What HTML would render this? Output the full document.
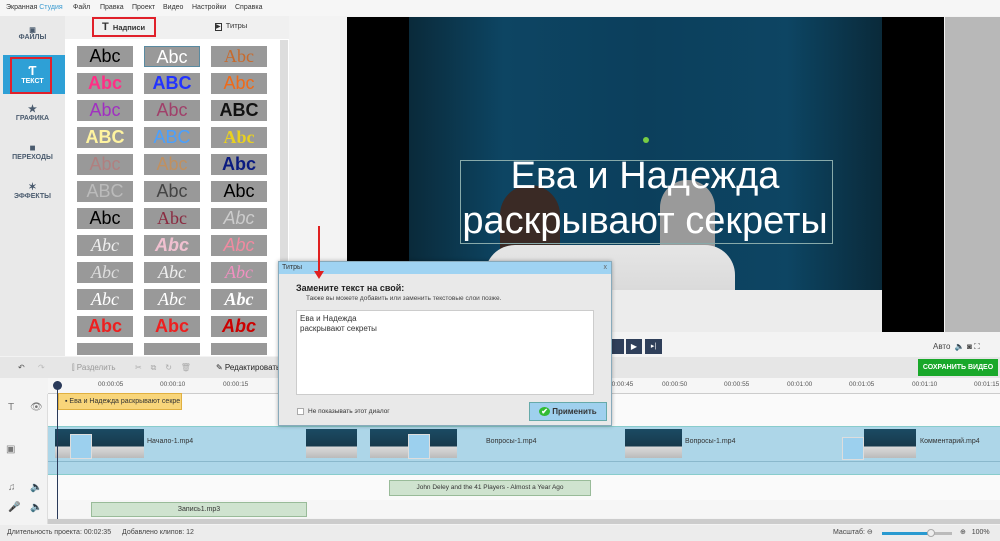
<!DOCTYPE html>
<html><head><meta charset="utf-8"><style>
*{margin:0;padding:0;box-sizing:border-box}
body{width:1000px;height:541px;overflow:hidden;background:#f3f3f3;font-family:"Liberation Sans",sans-serif;font-size:8px;color:#333;position:relative}
.a{position:absolute}
.tile{position:absolute;width:56px;height:21px;background:#999;font-size:18px;text-align:center;line-height:21px;font-family:"Liberation Sans",sans-serif;overflow:hidden}
.side{position:absolute;left:0;width:65px;height:38px;text-align:center;font-size:7px;font-weight:bold;color:#4a5b6e}
.ruler span{position:absolute;top:3px;font-size:6.5px;color:#555}
.thumb{position:absolute;background:linear-gradient(#1b4b63,#17394c 60%,#dcdcdc 60%,#bbb);}
</style></head><body>
<div class="a" style="left:0;top:0;width:1000px;height:16px;background:#f6f6f6;font-size:7px;line-height:16px">
<span class="a" style="left:6px">Экранная <span style="color:#3a9ad0">Студия</span></span>
<span class="a" style="left:73px">Файл</span><span class="a" style="left:100px">Правка</span><span class="a" style="left:132px">Проект</span><span class="a" style="left:163px">Видео</span><span class="a" style="left:192px">Настройки</span><span class="a" style="left:235px">Справка</span>
</div>
<div class="a" style="left:0;top:16px;width:65px;height:340px;background:#e9e9e9"></div>
<div class="side" style="top:16px;padding-top:10px">▣<br>ФАЙЛЫ</div>
<div class="a" style="left:3px;top:55px;width:62px;height:39px;background:#2ea0d6"></div>
<div class="a" style="left:10px;top:57px;width:42px;height:37px;border:2px solid #e0202a"></div>
<div class="side" style="top:58px;padding-top:6px;color:#fff;font-size:7px">
<div style="font-size:13px;line-height:14px">Ƭ</div>ТЕКСТ</div>
<div class="side" style="top:100px;padding-top:4px"><div style="font-size:10px">★</div>ГРАФИКА</div>
<div class="side" style="top:139px;padding-top:4px"><div style="font-size:10px">■</div>ПЕРЕХОДЫ</div>
<div class="side" style="top:178px;padding-top:4px"><div style="font-size:10px">✶</div>ЭФФЕКТЫ</div>
<div class="a" style="left:65px;top:16px;width:224px;height:340px;background:#fff"></div>
<div class="a" style="left:65px;top:16px;width:224px;height:23px;background:#f0f0f0"></div>
<div class="a" style="left:92px;top:17px;width:64px;height:20px;border:2px solid #e0202a;font-size:7.5px;font-weight:bold;line-height:16px;padding-left:8px"><b style="font-size:11px">T</b>&nbsp; Надписи</div>
<div class="a" style="left:215px;top:21px;font-size:7.5px"><span style="border:1px solid #333;font-size:6px">▶</span>&nbsp; Титры</div>
<div class="a" style="left:280px;top:40px;width:8px;height:316px;background:#ddd"></div>
<div class="tile" style="left:77px;top:46px;color:#000">Abc</div>
<div class="tile" style="left:144px;top:46px;color:#fff;border:1px solid #5a8aa0">Abc</div>
<div class="tile" style="left:211px;top:46px;color:#c86a2c;font-family:'Liberation Serif'">Abc</div>
<div class="tile" style="left:77px;top:73px;color:#ff2f86;font-weight:bold">Abc</div>
<div class="tile" style="left:144px;top:73px;color:#2233ff;font-weight:bold">ABC</div>
<div class="tile" style="left:211px;top:73px;color:#f06a18">Abc</div>
<div class="tile" style="left:77px;top:100px;color:#a030c0">Abc</div>
<div class="tile" style="left:144px;top:100px;color:#a0406a">Abc</div>
<div class="tile" style="left:211px;top:100px;color:#111;font-weight:bold">ABC</div>
<div class="tile" style="left:77px;top:127px;color:#fff4a0;font-weight:bold">ABC</div>
<div class="tile" style="left:144px;top:127px;color:#4aa0ff">ABC</div>
<div class="tile" style="left:211px;top:127px;color:#e8d020;font-weight:bold;font-family:'Liberation Serif'">Abc</div>
<div class="tile" style="left:77px;top:154px;color:#b08080">Abc</div>
<div class="tile" style="left:144px;top:154px;color:#c09060">Abc</div>
<div class="tile" style="left:211px;top:154px;color:#0a1a80;font-weight:bold">Abc</div>
<div class="tile" style="left:77px;top:181px;color:#bbb">ABC</div>
<div class="tile" style="left:144px;top:181px;color:#444">Abc</div>
<div class="tile" style="left:211px;top:181px;color:#000">Abc</div>
<div class="tile" style="left:77px;top:208px;color:#000">Abc</div>
<div class="tile" style="left:144px;top:208px;color:#8a2a40;font-family:'Liberation Serif'">Abc</div>
<div class="tile" style="left:211px;top:208px;color:#ccc;font-style:italic">Abc</div>
<div class="tile" style="left:77px;top:235px;color:#eee;font-style:italic;font-family:'Liberation Serif'">Abc</div>
<div class="tile" style="left:144px;top:235px;color:#f0c0d0;font-style:italic;font-weight:bold">Abc</div>
<div class="tile" style="left:211px;top:235px;color:#f08aa0;font-style:italic">Abc</div>
<div class="tile" style="left:77px;top:262px;color:#ddd;font-style:italic;font-family:'Liberation Serif'">Abc</div>
<div class="tile" style="left:144px;top:262px;color:#eee;font-style:italic;font-family:'Liberation Serif'">Abc</div>
<div class="tile" style="left:211px;top:262px;color:#f090c0;font-style:italic;font-family:'Liberation Serif'">Abc</div>
<div class="tile" style="left:77px;top:289px;color:#fff;font-style:italic;font-family:'Liberation Serif'">Abc</div>
<div class="tile" style="left:144px;top:289px;color:#fff;font-style:italic;font-family:'Liberation Serif'">Abc</div>
<div class="tile" style="left:211px;top:289px;color:#fff;font-style:italic;font-weight:bold;font-family:'Liberation Serif'">Abc</div>
<div class="tile" style="left:77px;top:316px;color:#ee2020;font-weight:bold">Abc</div>
<div class="tile" style="left:144px;top:316px;color:#ee2020;font-weight:bold">Abc</div>
<div class="tile" style="left:211px;top:316px;color:#cc0000;font-weight:bold;font-style:italic">Abc</div>
<div class="tile" style="left:77px;top:343px;height:12px"></div>
<div class="tile" style="left:144px;top:343px;height:12px"></div>
<div class="tile" style="left:211px;top:343px;height:12px"></div>
<div class="a" style="left:290px;top:16px;width:710px;height:340px;background:#f3f3f3"></div>
<div class="a" style="left:347px;top:17px;width:597px;height:315px;background:#000"></div>
<div class="a" style="left:945px;top:17px;width:55px;height:315px;background:#b8b8b8"></div>
<div class="a" style="left:409px;top:17px;width:473px;height:315px;background:linear-gradient(90deg,#0a2a3a,#0d4563 20%,#0c3f5c 50%,#0d4563 80%,#0a2a3a);"></div>
<div class="a" style="left:500px;top:185px;width:60px;height:70px;background:#3a2a25;border-radius:30px 30px 0 0"></div>
<div class="a" style="left:660px;top:180px;width:55px;height:70px;background:#9a9a9a;border-radius:28px 28px 0 0"></div>
<div class="a" style="left:485px;top:245px;width:250px;height:87px;background:linear-gradient(#e6e6e6,#cfcfcf);border-radius:30px 30px 0 0"></div>
<div class="a" style="left:590px;top:290px;width:292px;height:42px;background:#ececec"></div>
<div class="a" style="left:460px;top:160px;width:373px;height:84px;border:1px solid #8aa"></div>
<div class="a" style="left:345px;top:154px;width:600px;text-align:center;color:#fff;font-size:38px;line-height:45px;white-space:nowrap">Ева и Надежда<br>раскрывают секреты</div>
<div class="a" style="left:643px;top:137px;width:6px;height:6px;border-radius:50%;background:#7c4"></div>
<div class="a" style="left:608px;top:339px;width:16px;height:15px;background:#2f3f5a"></div>
<div class="a" style="left:626px;top:339px;width:16px;height:15px;background:#2f3f5a;color:#fff;font-size:8px;text-align:center;line-height:15px">▶</div>
<div class="a" style="left:645px;top:339px;width:17px;height:15px;background:#2f3f5a;color:#fff;font-size:7px;text-align:center;line-height:15px">▸|</div>
<div class="a" style="left:933px;top:342px;font-size:8px;color:#444">Авто &nbsp;🔈 ◙ ⛶</div>
<div class="a" style="left:0;top:357px;width:1000px;height:21px;background:#e6e6e6;font-size:8px;line-height:21px;color:#555">
<span class="a" style="left:18px">↶</span><span class="a" style="left:38px;color:#bbb">↷</span>
<span class="a" style="left:72px;color:#999">⫿ Разделить</span><span class="a" style="left:135px;color:#aaa">✂ &nbsp;&nbsp; ⧉ &nbsp;&nbsp; ↻ &nbsp;&nbsp; 🗑</span>
<span class="a" style="left:216px;color:#222">✎ Редактировать</span></div>
<div class="a" style="left:918px;top:359px;width:80px;height:17px;background:#19a82a;color:#fff;font-size:7px;font-weight:bold;text-align:center;line-height:17px">СОХРАНИТЬ ВИДЕО</div>
<div class="a ruler" style="left:48px;top:378px;width:952px;height:16px;background:#f6f6f6;border-bottom:1px solid #ccc">
<span style="left:50px">00:00:05</span><span style="left:112px">00:00:10</span><span style="left:175px">00:00:15</span><span style="left:560px">00:00:45</span><span style="left:614px">00:00:50</span><span style="left:676px">00:00:55</span><span style="left:739px">00:01:00</span><span style="left:801px">00:01:05</span><span style="left:864px">00:01:10</span><span style="left:926px">00:01:15</span>
</div>
<div class="a" style="left:0;top:394px;width:48px;height:130px;background:#f3f3f3;border-right:1px solid #ddd;color:#777;font-size:10px">
<span class="a" style="left:8px;top:8px">T</span><span class="a" style="left:30px;top:8px">👁</span>
<span class="a" style="left:6px;top:50px">▣</span>
<span class="a" style="left:8px;top:88px">♫</span><span class="a" style="left:30px;top:88px">🔈</span>
<span class="a" style="left:8px;top:108px">🎤</span><span class="a" style="left:30px;top:108px">🔈</span></div>
<div class="a" style="left:48px;top:394px;width:952px;height:32px;background:#fafafa"></div>
<div class="a" style="left:58px;top:393px;width:124px;height:17px;background:#f8d57a;border:1px solid #e0b040;font-size:7px;line-height:15px;padding-left:6px;white-space:nowrap;overflow:hidden">▪ Ева и Надежда раскрывают секре</div>
<div class="a" style="left:48px;top:426px;width:952px;height:49px;background:#add6e8;border-top:1px solid #8cc;border-bottom:1px solid #8cc"></div>
<div class="a" style="left:48px;top:461px;width:952px;height:1px;background:#8ab8cc"></div>
<div class="thumb" style="left:55px;top:429px;width:89px;height:29px"></div>
<div class="a" style="left:70px;top:434px;width:22px;height:25px;background:#9cd0ee;border:1px solid #ddd"></div>
<div class="a" style="left:147px;top:438px;font-size:7px">Начало-1.mp4</div>
<div class="thumb" style="left:306px;top:429px;width:51px;height:29px"></div>
<div class="thumb" style="left:370px;top:429px;width:87px;height:29px"></div>
<div class="a" style="left:408px;top:434px;width:22px;height:25px;background:#9cd0ee;border:1px solid #ddd"></div>
<div class="a" style="left:486px;top:438px;font-size:7px">Вопросы-1.mp4</div>
<div class="thumb" style="left:625px;top:429px;width:57px;height:29px"></div>
<div class="a" style="left:685px;top:438px;font-size:7px">Вопросы-1.mp4</div>
<div class="thumb" style="left:864px;top:429px;width:52px;height:29px"></div>
<div class="a" style="left:842px;top:437px;width:22px;height:23px;background:#9cd0ee;border:1px solid #ddd"></div>
<div class="a" style="left:920px;top:438px;font-size:7px">Комментарий.mp4</div>
<div class="a" style="left:48px;top:475px;width:952px;height:25px;background:#fafafa"></div>
<div class="a" style="left:389px;top:480px;width:202px;height:16px;background:#cfe3cf;border:1px solid #9b9;font-size:6.5px;text-align:center;line-height:14px">John Deley and the 41 Players - Almost a Year Ago</div>
<div class="a" style="left:48px;top:500px;width:952px;height:18px;background:#f6f6f6"></div>
<div class="a" style="left:91px;top:502px;width:216px;height:15px;background:#cfe3cf;border:1px solid #9b9;font-size:7px;text-align:center;line-height:13px">Запись1.mp3</div>
<div class="a" style="left:48px;top:519px;width:952px;height:5px;background:#ccc"></div>
<div class="a" style="left:57px;top:381px;width:1px;height:138px;background:#2a3a5a"></div>
<div class="a" style="left:53px;top:381px;width:9px;height:9px;border-radius:50%;background:#2a3a5a"></div>
<div class="a" style="left:0;top:525px;width:1000px;height:16px;background:#ececec;font-size:7px;line-height:16px;color:#444">
<span class="a" style="left:7px">Длительность проекта: 00:02:35</span><span class="a" style="left:122px">Добавлено клипов: 12</span>
<span class="a" style="left:833px">Масштаб: ⊖</span><div class="a" style="left:882px;top:7px;width:70px;height:3px;background:#bbb"><div style="width:48px;height:3px;background:#2a9ad0"></div></div>
<div class="a" style="left:927px;top:4px;width:8px;height:8px;border-radius:50%;background:#eee;border:1px solid #aaa"></div>
<span class="a" style="left:960px">⊕ &nbsp; 100%</span></div>
<div class="a" style="left:278px;top:261px;width:334px;height:165px;background:#e9e9e9;border:1px solid #8ab;box-shadow:0 0 4px rgba(0,0,0,.3)">
<div style="height:12px;background:#9fd3f2;font-size:7px;line-height:12px;padding-left:3px">Титры<span style="float:right;padding-right:4px;color:#666">x</span></div>
<div class="a" style="left:17px;top:21px;font-size:9px;font-weight:bold;color:#222">Замените текст на свой:</div>
<div class="a" style="left:27px;top:33px;font-size:6.5px;color:#444">Также вы можете добавить или заменить текстовые слои позже.</div>
<div class="a" style="left:17px;top:48px;width:298px;height:85px;background:#fff;border:1px solid #ccc;font-size:8px;line-height:10px;padding:3px">Ева и Надежда<br>раскрывают секреты</div>
<div class="a" style="left:18px;top:146px;width:7px;height:7px;background:#fff;border:1px solid #aaa"></div>
<div class="a" style="left:29px;top:146px;font-size:6.5px">Не показывать этот диалог</div>
<div class="a" style="left:250px;top:140px;width:78px;height:19px;background:#9fd0ee;border:1px solid #6aa;font-size:8px;font-weight:bold;text-align:center;line-height:17px"><span style="color:#fff;background:#3b3;border-radius:50%;padding:0 2px">✔</span> Применить</div>
</div>
<div class="a" style="left:318px;top:226px;width:2px;height:48px;background:#e02020"></div>
<div class="a" style="left:314px;top:271px;width:0;height:0;border-left:5px solid transparent;border-right:5px solid transparent;border-top:8px solid #e02020"></div>
</body></html>
